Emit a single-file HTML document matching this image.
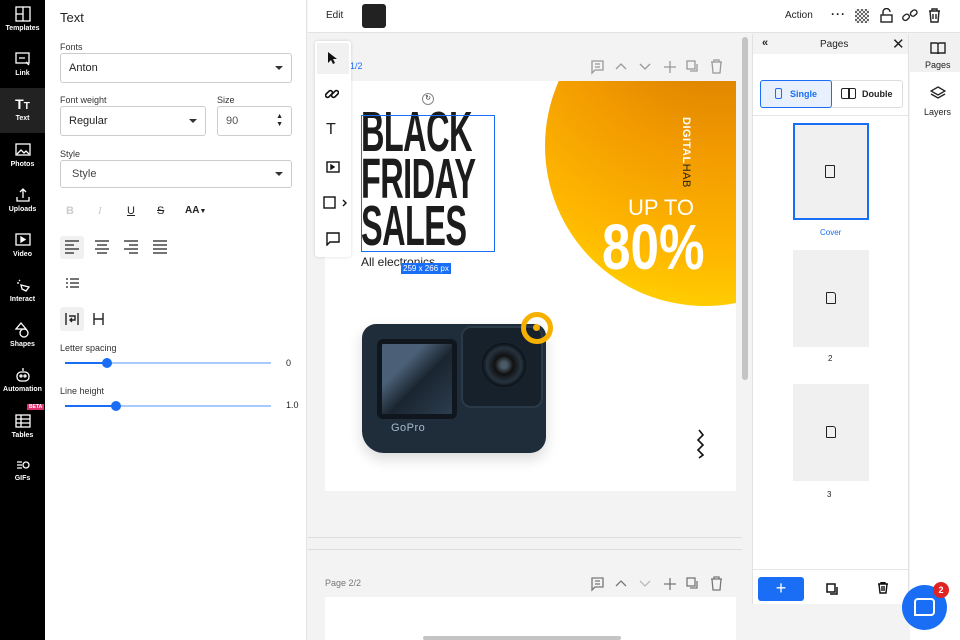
<!DOCTYPE html>
<html><head><meta charset="utf-8"><style>
*{box-sizing:border-box;margin:0;padding:0}
body{width:960px;height:640px;overflow:hidden;font-family:"Liberation Sans",sans-serif;background:#f3f3f3;position:relative;color:#222}
.a{position:absolute}
.lb{left:0;top:0;width:45px;height:640px;background:#000}
.lb .it{position:absolute;left:0;width:45px;text-align:center;color:#fff;font-size:7px;font-weight:bold}
.lb svg{display:block;margin:0 auto 3px}
.panel{left:45px;top:0;width:262px;height:640px;background:#fff;border-right:1px solid #e4e4e4}
.lbl{font-size:9px;color:#333}
.sel{border:1px solid #ccc;border-radius:3px;height:30px;font-size:11px;padding:0 8px;display:flex;align-items:center;justify-content:space-between;color:#222}
.car{width:0;height:0;border-left:4px solid transparent;border-right:4px solid transparent;border-top:4px solid #333}
.page{background:#fff}
</style></head><body>
<div class="a lb">
 <div class="it" style="top:6px"><svg width="16" height="16" viewBox="0 0 16 16" fill="none" stroke="#fff" stroke-width="1.3"><rect x="1" y="1" width="14" height="14"/><path d="M8 1v14M1 8h7"/></svg>Templates</div>
 <div class="it" style="top:51px"><svg width="16" height="16" viewBox="0 0 16 16" fill="none" stroke="#fff" stroke-width="1.3"><rect x="1" y="2" width="13" height="10"/><path d="M4 7h6M11 11l3 3"/></svg>Link</div>
 <div class="it" style="top:88px;height:45px;background:#222;padding-top:8px"><div style="font-size:14px;margin-bottom:3px">T<span style="font-size:10px">T</span></div>Text</div>
 <div class="it" style="top:142px"><svg width="16" height="16" viewBox="0 0 16 16" fill="none" stroke="#fff" stroke-width="1.3"><rect x="1" y="2" width="14" height="11"/><path d="M2 12l4-4 3 3 2-2 3 3"/></svg>Photos</div>
 <div class="it" style="top:187px"><svg width="16" height="16" viewBox="0 0 16 16" fill="none" stroke="#fff" stroke-width="1.3"><path d="M8 11V2M5 5l3-3 3 3M2 10v4h12v-4"/></svg>Uploads</div>
 <div class="it" style="top:232px"><svg width="16" height="16" viewBox="0 0 16 16" fill="none" stroke="#fff" stroke-width="1.3"><rect x="1" y="2" width="14" height="11"/><path d="M6 5v5l4-2.5z" fill="#fff"/></svg>Video</div>
 <div class="it" style="top:277px"><svg width="16" height="16" viewBox="0 0 16 16" fill="none" stroke="#fff" stroke-width="1.3"><path d="M4 3l1 1M2 6h2M6 8l8 2-3 4-4-2z"/></svg>Interact</div>
 <div class="it" style="top:322px"><svg width="16" height="16" viewBox="0 0 16 16" fill="none" stroke="#fff" stroke-width="1.3"><path d="M6 1l5 6H1z"/><circle cx="9" cy="11" r="4"/></svg>Shapes</div>
 <div class="it" style="top:367px"><svg width="16" height="16" viewBox="0 0 16 16" fill="none" stroke="#fff" stroke-width="1.3"><path d="M8 1v3"/><rect x="2" y="5" width="12" height="9" rx="4"/><circle cx="6" cy="9" r="1"/><circle cx="10" cy="9" r="1"/></svg>Automation</div>
 <div class="a" style="top:404px;left:27px;background:#e0306a;color:#fff;font-size:5px;font-weight:bold;padding:0 2px">BETA</div>
 <div class="it" style="top:413px"><svg width="16" height="16" viewBox="0 0 16 16" fill="none" stroke="#fff" stroke-width="1.3"><rect x="1" y="2" width="14" height="12"/><path d="M1 6h14M1 10h14M6 2v12"/></svg>Tables</div>
 <div class="it" style="top:458px"><svg width="16" height="14" viewBox="0 0 16 14" fill="none" stroke="#fff" stroke-width="1.3"><path d="M2 4h5M2 7h5M2 10h5"/><circle cx="11" cy="7" r="3"/></svg>GIFs</div>
</div>

<div class="a panel">
 <div class="a" style="left:15px;top:10px;font-size:13px">Text</div>
 <div class="a lbl" style="left:15px;top:42px">Fonts</div>
 <div class="a sel" style="left:15px;top:53px;width:232px"><span>Anton</span><span class="car"></span></div>
 <div class="a lbl" style="left:15px;top:95px">Font weight</div>
 <div class="a sel" style="left:15px;top:106px;width:146px"><span>Regular</span><span class="car"></span></div>
 <div class="a lbl" style="left:172px;top:95px">Size</div>
 <div class="a sel" style="left:172px;top:106px;width:75px;color:#555"><span>90</span><span style="font-size:7px;line-height:8px;color:#222">▲<br>▼</span></div>
 <div class="a lbl" style="left:15px;top:149px">Style</div>
 <div class="a sel" style="left:15px;top:160px;width:232px;height:28px;padding-left:11px;color:#444"><span>Style</span><span class="car"></span></div>
 <div class="a" style="left:21px;top:205px;font-size:11px;font-weight:bold;color:#ccc">B</div>
 <div class="a" style="left:53px;top:205px;font-size:11px;font-style:italic;color:#ccc;font-family:'Liberation Serif'">I</div>
 <div class="a" style="left:82px;top:205px;font-size:11px;text-decoration:underline">U</div>
 <div class="a" style="left:112px;top:205px;font-size:11px;text-decoration:line-through">S</div>
 <div class="a" style="left:140px;top:205px;font-size:10px;font-weight:bold">AA<span style="font-size:7px">▼</span></div>
 <div class="a" style="left:15px;top:236px;width:24px;height:23px;background:#f0f0f0;border-radius:3px"></div>
 <svg class="a" style="left:20px;top:240px" width="130" height="14" stroke="#222" stroke-width="1.3">
  <path d="M0 1h14M0 5h9M0 9h14M0 13h9"/>
  <path d="M30 1h14M32 5h10M30 9h14M32 13h10"/>
  <path d="M59 1h14M64 5h9M59 9h14M64 13h9"/>
  <path d="M88 1h14M88 5h14M88 9h14M88 13h14"/>
 </svg>
 <svg class="a" style="left:21px;top:278px" width="13" height="11" stroke="#222" stroke-width="1.3"><path d="M0 1h2M0 5h2M0 9h2M4 1h9M4 5h9M4 9h9"/></svg>
 <div class="a" style="left:15px;top:307px;width:24px;height:24px;background:#f0f0f0;border-radius:3px"></div>
 <svg class="a" style="left:20px;top:312px" width="40" height="14" stroke="#222" stroke-width="1.4" fill="none"><path d="M1 1v12M13 1v12M4 4h6v4H5M7 6l-2 2 2 2"/><path d="M29 1v12M38 1v12M29 7h9"/></svg>
 <div class="a lbl" style="left:15px;top:343px">Letter spacing</div>
 <div class="a" style="left:20px;top:362px;width:206px;height:2px;background:#a9c8fb"></div>
 <div class="a" style="left:20px;top:362px;width:42px;height:2px;background:#1a6ef5"></div>
 <div class="a" style="left:57px;top:358px;width:10px;height:10px;border-radius:50%;background:#1a6ef5"></div>
 <div class="a" style="left:241px;top:358px;font-size:9px">0</div>
 <div class="a lbl" style="left:15px;top:386px">Line height</div>
 <div class="a" style="left:20px;top:405px;width:206px;height:2px;background:#a9c8fb"></div>
 <div class="a" style="left:20px;top:405px;width:51px;height:2px;background:#1a6ef5"></div>
 <div class="a" style="left:66px;top:401px;width:10px;height:10px;border-radius:50%;background:#1a6ef5"></div>
 <div class="a" style="left:241px;top:400px;font-size:9px">1.0</div>
</div>

<div class="a" style="left:308px;top:0;width:652px;height:33px;background:#fff;border-bottom:1px solid #e2e2e2"></div>
<div class="a" style="left:326px;top:10px;font-size:10px">Edit</div>
<div class="a" style="left:362px;top:4px;width:24px;height:24px;background:#222;border-radius:3px"></div>
<div class="a" style="left:785px;top:10px;font-size:10px">Action</div>
<div class="a" style="left:831px;top:7px;font-size:12px;font-weight:bold;letter-spacing:1px">···</div>
<div class="a" style="left:855px;top:9px;width:14px;height:14px;background:repeating-conic-gradient(#666 0 25%,#eee 0 50%) 0 0/4px 4px"></div>
<svg class="a" style="left:880px;top:8px" width="13" height="15" fill="none" stroke="#222" stroke-width="1.4"><path d="M3 7V4a3.5 3.5 0 0 1 7 0"/><rect x="1" y="7" width="11" height="7"/></svg>
<svg class="a" style="left:902px;top:8px" width="17" height="15" fill="none" stroke="#222" stroke-width="1.4"><rect x="1" y="7" width="7" height="5" rx="2.5" transform="rotate(-40 4 10)"/><rect x="8" y="3" width="7" height="5" rx="2.5" transform="rotate(-40 11 5)"/></svg>
<svg class="a" style="left:928px;top:8px" width="13" height="15" fill="none" stroke="#222" stroke-width="1.4"><path d="M1 3h11M4 3V1h5v2M2 3l1 11h7l1-11M5 6v5M8 6v5"/></svg>

<div class="a" style="left:742px;top:37px;width:6px;height:343px;background:#c4c4c4;border-radius:3px"></div>
<div class="a" style="left:350px;top:61px;font-size:9px;color:#1a6ef5">1/2</div>
<svg class="a" style="left:590px;top:59px" width="136" height="16" fill="none" stroke="#999" stroke-width="1.3"><path d="M2 2h11v9H5l-3 3zM5 5h5M5 8h5"/><path d="M26 10l5-5 5 5"/><path d="M50 5l5 5 5-5"/><path d="M80 2v12M74 8h12"/><rect x="97" y="2" width="8" height="8"/><path d="M100 12h7V5"/><path d="M121 3h11M124 3V1h5v2M122 3l1 11h7l1-11"/></svg>
<div class="a page" style="left:325px;top:81px;width:411px;height:410px;overflow:hidden">
 <div class="a" style="left:220px;top:-95px;width:320px;height:320px;border-radius:50%;background:radial-gradient(circle at 55% 0%,#c96d00 0%,#f29a00 45%,#ffb800 75%,#ffe100 100%)"></div>
 <div class="a" style="left:355px;top:36px;writing-mode:vertical-rl;font-size:11px;color:#fff;font-weight:bold;letter-spacing:0.5px">DIGITAL<span style="font-weight:normal;color:#222">HAB</span></div>
 <div class="a" style="left:303px;top:114px;font-size:22px;color:#fff">UP TO</div>
 <div class="a" style="left:277px;top:129px;font-size:64px;color:#fff;font-weight:bold;transform:scaleX(.8);transform-origin:left">80%</div>
 <div class="a" style="left:36px;top:28px;font-size:57px;line-height:47px;font-weight:bold;color:#1c1c1c;transform:scaleX(.57);transform-origin:left;letter-spacing:-1px">BLACK<br>FRIDAY<br>SALES</div>
 <div class="a" style="left:36px;top:34px;width:134px;height:137px;border:1px solid #1a6ef5"></div>
 <div class="a" style="left:97px;top:12px;width:12px;height:12px;border:1px solid #888;border-radius:50%;background:#fff;font-size:7px;text-align:center;line-height:10px">↻</div>
 <div class="a" style="left:36px;top:174px;font-size:12px;color:#222">All electronics</div>
 <div class="a" style="left:76px;top:182px;background:#1a6ef5;color:#fff;font-size:8px;padding:1px 2px">259 x 266 px</div>
 <div class="a" style="left:37px;top:243px;width:184px;height:129px;background:#1f2d3a;border-radius:14px 12px 16px 22px;box-shadow:0 6px 14px rgba(0,0,0,.15)"></div>
 <div class="a" style="left:52px;top:258px;width:80px;height:80px;background:linear-gradient(135deg,#4b6076 30%,#1a2530 55%,#2c3d4e);border-radius:6px;border:5px solid #0f161d"></div>
 <div class="a" style="left:136px;top:245px;width:82px;height:82px;background:#16212b;border-radius:10px;border:2px solid #2b3a48"></div>
 <div class="a" style="left:157px;top:262px;width:44px;height:44px;background:radial-gradient(circle,#4a5a66 10%,#111 30%,#26333f 55%,#0b1116 70%);border-radius:50%"></div>
 <div class="a" style="left:66px;top:341px;font-size:11px;color:#a9bacb;letter-spacing:.5px">GoPro</div>
 <div class="a" style="left:196px;top:231px;width:32px;height:32px;border:5px solid #f5b000;border-radius:50%"></div>
 <div class="a" style="left:208px;top:243px;width:7px;height:7px;background:#f5b000;border-radius:50%"></div>
 <svg class="a" style="left:370px;top:348px" width="10" height="30" fill="none" stroke="#111" stroke-width="1.6"><path d="M4 1l4 5-5 5 5 5-5 5 5 5-4 3"/></svg>
</div>
<div class="a" style="left:315px;top:41px;width:36px;height:216px;background:#fff;border-radius:3px;box-shadow:0 0 3px rgba(0,0,0,.15)"></div>
<div class="a" style="left:317px;top:43px;width:32px;height:31px;background:#f1f1f1"></div>
<svg class="a" style="left:326px;top:51px" width="12" height="14"><path d="M2 1v11l3-3 2 4 2-1-2-4h4z" fill="#111"/></svg>
<svg class="a" style="left:325px;top:87px" width="14" height="14" fill="none" stroke="#111" stroke-width="1.6"><rect x="0" y="5" width="8" height="4" rx="2" transform="rotate(-45 4 7)"/><rect x="6" y="5" width="8" height="4" rx="2" transform="rotate(-45 10 7)"/></svg>
<div class="a" style="left:326px;top:121px;font-size:16px">T</div>
<svg class="a" style="left:326px;top:161px" width="14" height="12" fill="none" stroke="#111" stroke-width="1.4"><rect x="1" y="1" width="12" height="10"/><path d="M5 4v4l3-2z" fill="#111"/></svg>
<svg class="a" style="left:323px;top:196px" width="28" height="14" fill="none" stroke="#111" stroke-width="1.4"><rect x="1" y="1" width="11" height="11"/><path d="M20 4l3 3-3 3"/></svg>
<svg class="a" style="left:326px;top:232px" width="14" height="14" fill="none" stroke="#111" stroke-width="1.4"><path d="M1 1h12v9H4l-3 3z"/></svg>

<div class="a" style="left:308px;top:537px;width:434px;height:1px;background:#ddd"></div>
<div class="a" style="left:308px;top:549px;width:434px;height:1px;background:#ddd"></div>
<div class="a" style="left:325px;top:578px;font-size:9px;color:#777">Page 2/2</div>
<svg class="a" style="left:590px;top:576px" width="136" height="16" fill="none" stroke="#777" stroke-width="1.3"><path d="M2 2h11v9H5l-3 3zM5 5h5M5 8h5"/><path d="M26 10l5-5 5 5"/><path d="M50 5l5 5 5-5" stroke="#bbb"/><path d="M80 2v12M74 8h12"/><rect x="97" y="2" width="8" height="8"/><path d="M100 12h7V5"/><path d="M121 3h11M124 3V1h5v2M122 3l1 11h7l1-11"/></svg>
<div class="a page" style="left:325px;top:597px;width:411px;height:43px"></div>
<div class="a" style="left:423px;top:636px;width:198px;height:4px;background:#c4c4c4;border-radius:2px"></div>

<div class="a" style="left:752px;top:34px;width:157px;height:570px;background:#fff;border-left:1px solid #e2e2e2;border-right:1px solid #e2e2e2">
 <div style="height:20px;background:#f3f3f3;position:relative">
  <span class="a" style="left:9px;top:3px;font-size:11px;font-weight:bold">«</span>
  <span class="a" style="left:67px;top:5px;font-size:10px">Pages</span>
  <span class="a" style="left:139px;top:1px;font-size:15px">✕</span>
 </div>
</div>
<div class="a" style="left:760px;top:80px;width:143px;height:28px;border:1px solid #ddd;border-radius:3px"></div>
<div class="a" style="left:760px;top:80px;width:72px;height:28px;border:1px solid #1a6ef5;background:#e8f0fe;border-radius:3px"></div>
<div class="a" style="left:775px;top:88px;width:7px;height:11px;border:1.5px solid #1a6ef5;border-radius:2px"></div>
<div class="a" style="left:790px;top:89px;font-size:9px;font-weight:bold;color:#1a6ef5">Single</div>
<div class="a" style="left:841px;top:88px;width:15px;height:11px;border:1.5px solid #222;border-radius:2px"></div>
<div class="a" style="left:848px;top:88px;width:1.5px;height:11px;background:#222"></div>
<div class="a" style="left:862px;top:89px;font-size:9px;font-weight:bold">Double</div>
<div class="a" style="left:753px;top:115px;width:155px;height:1px;background:#e6e6e6"></div>
<div class="a" style="left:793px;top:123px;width:76px;height:97px;background:#f0f0f0;border:2px solid #1a6ef5"></div>
<div class="a" style="left:825px;top:165px;width:10px;height:13px;border:1.5px solid #222;border-radius:1px"></div>
<div class="a" style="left:820px;top:228px;font-size:8px;color:#1a6ef5">Cover</div>
<div class="a" style="left:793px;top:250px;width:76px;height:97px;background:#f0f0f0"></div>
<div class="a" style="left:826px;top:292px;width:10px;height:12px;border:1.5px solid #222;border-radius:1px 3px 1px 1px"></div>
<div class="a" style="left:828px;top:354px;font-size:8px">2</div>
<div class="a" style="left:793px;top:384px;width:76px;height:97px;background:#f0f0f0"></div>
<div class="a" style="left:826px;top:426px;width:10px;height:12px;border:1.5px solid #222;border-radius:1px 3px 1px 1px"></div>
<div class="a" style="left:827px;top:490px;font-size:8px">3</div>
<div class="a" style="left:753px;top:569px;width:155px;height:1px;background:#e6e6e6"></div>
<div class="a" style="left:758px;top:577px;width:46px;height:24px;background:#1a6ef5;border-radius:3px;color:#fff;font-size:18px;text-align:center;line-height:23px">+</div>
<svg class="a" style="left:826px;top:583px" width="12" height="12" fill="none" stroke="#111" stroke-width="1.5"><rect x="1" y="1" width="8" height="8"/><path d="M4 11h7V4"/></svg>
<svg class="a" style="left:878px;top:582px" width="10" height="12" fill="none" stroke="#111" stroke-width="1.4"><path d="M0 2h10M3 2V0.5h4V2M1 2l1 9h6l1-9M4 4v5M6 4v5"/></svg>

<div class="a" style="left:910px;top:34px;width:50px;height:606px;background:#fff"></div>
<div class="a" style="left:910px;top:34px;width:50px;height:38px;background:#f1f1f1"></div>
<svg class="a" style="left:930px;top:42px" width="16" height="12" fill="none" stroke="#222" stroke-width="1.4"><path d="M1 1h6l1 1 1-1h6v10H9l-1 1-1-1H1zM8 2v9"/></svg>
<div class="a" style="left:925px;top:60px;font-size:9px">Pages</div>
<svg class="a" style="left:930px;top:86px" width="16" height="14" fill="none" stroke="#222" stroke-width="1.3"><path d="M8 1l7 4-7 4-7-4zM1 8l7 4 7-4"/></svg>
<div class="a" style="left:924px;top:107px;font-size:9px">Layers</div>
<div class="a" style="left:902px;top:585px;width:45px;height:45px;background:#1a6ef5;border-radius:50%"></div>
<div class="a" style="left:914px;top:598px;width:21px;height:18px;border:2px solid #fff;border-radius:4px 4px 4px 0"></div>
<div class="a" style="left:933px;top:582px;width:16px;height:16px;background:#e02424;border-radius:50%;color:#fff;font-size:9px;font-weight:bold;text-align:center;line-height:16px">2</div>
</body></html>
